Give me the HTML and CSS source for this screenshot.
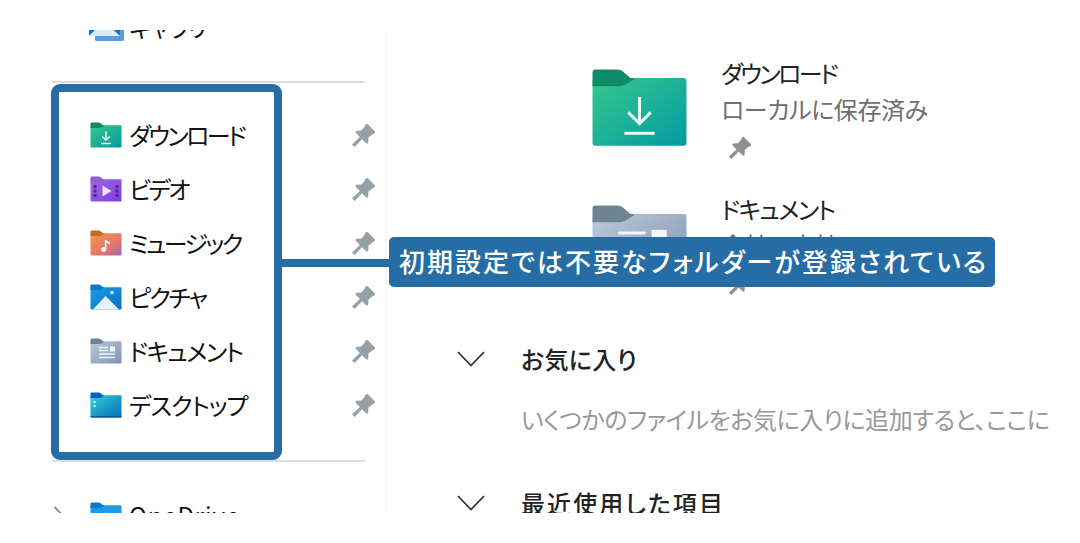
FILE: index.html
```html
<!DOCTYPE html>
<html lang="ja">
<head>
<meta charset="utf-8">
<title>エクスプローラー</title>
<link rel="stylesheet" href="styles.css">
</head>
<body>
<svg class="defs" width="0" height="0" aria-hidden="true">
  <defs>
    <linearGradient id="gGreen" x1="0" y1="0" x2="1" y2="1"><stop offset="0" stop-color="#38c78c"/><stop offset="1" stop-color="#019ba3"/></linearGradient>
    <linearGradient id="gPurple" x1="0" y1="0" x2="1" y2="1"><stop offset="0" stop-color="#a468e8"/><stop offset="1" stop-color="#7b3de0"/></linearGradient>
    <linearGradient id="gOrange" x1="0" y1="0" x2="1" y2="1"><stop offset="0" stop-color="#f59452"/><stop offset=".6" stop-color="#e5766c"/><stop offset="1" stop-color="#a066b0"/></linearGradient>
    <linearGradient id="gBlue" x1="0" y1="0" x2="1" y2="1"><stop offset="0" stop-color="#1f9be6"/><stop offset="1" stop-color="#0a6fc4"/></linearGradient>
    <linearGradient id="gSlate" x1="0" y1="0" x2="1" y2="1"><stop offset="0" stop-color="#bccadb"/><stop offset="1" stop-color="#7c94b0"/></linearGradient>
    <linearGradient id="gDesk" x1="0" y1="0" x2="1" y2="1"><stop offset="0" stop-color="#2fd0d8"/><stop offset="1" stop-color="#0a6cb8"/></linearGradient>
    <path id="tab" d="M.5 1.5Q.5.5 1.5.5H8.500Q10 .5 11 1.500L13 3.300H14.200V3.700L11.500 5.300Q10.500 6 9.500 6H.5Z"/>
    <rect id="body" x=".5" y="3.300" width="31" height="22.300" rx="1"/>
    <path id="pinShape" d="M14.200 1.200C14.800.7 15.600.8 16.100 1.300L22.700 7.900C23.400 8.600 23.200 9.700 22.300 10.100L20.300 11 16.700 14.100 16.600 18.400C16.500 19.600 15.200 20.100 14.400 19.300L10.600 15.500 3.400 23 1 20.600 8.500 13.400 4.700 9.600C3.900 8.800 4.400 7.500 5.600 7.400L9.900 7.300 13 3.700Z"/>
  </defs>
</svg>

<div class="shot">
  <nav class="sidebar">
    <div class="nav-row">
      <svg class="ico ico-gallery" viewBox="0 0 36 28"><rect x="7" y="8" width="29" height="20" rx="1.500" fill="#5a9bdc"/><rect x="1" y="1" width="31" height="22" rx="1.500" fill="#0a78cc"/><path d="M1 23 16 8 32 23Z" fill="#d8ecfb"/></svg>
      <span class="nav-label ls-c">ギャラリー</span>
    </div>
    <hr class="rule rule-a">
    <div class="group">
      <div class="nav-row">
        <svg class="ico" viewBox="0 0 32 26"><use href="#body" fill="url(#gGreen)"/><use href="#tab" fill="#0f8a66"/><path d="M16 9.500V18M12.300 14.600 16 18.300 19.700 14.600M11 21.500H21" fill="none" stroke="#eafaf5" stroke-width="1.400"/></svg>
        <span class="nav-label ls-a">ダウンロード</span>
        <svg class="pin" viewBox="0 0 24 24"><use href="#pinShape"/></svg>
      </div>
      <div class="nav-row">
        <svg class="ico" viewBox="0 0 32 26"><use href="#body" fill="url(#gPurple)"/><use href="#tab" fill="#8f62c6"/><path d="M12.500 9.500 21.500 15 12.500 20.500Z" fill="#ece4fb"/><path d="M3.500 9h3v3h-3zM3.500 13.500h3v3h-3zM3.500 18h3v3h-3zM25.500 9h3v3h-3zM25.500 13.500h3v3h-3zM25.500 18h3v3h-3z" fill="#4a2a8c"/></svg>
        <span class="nav-label ls-a">ビデオ</span>
        <svg class="pin" viewBox="0 0 24 24"><use href="#pinShape"/></svg>
      </div>
      <div class="nav-row">
        <svg class="ico" viewBox="0 0 32 26"><use href="#body" fill="url(#gOrange)"/><use href="#tab" fill="#c96a14"/><path d="M15.600 10V19.400" stroke="#fdf3ee" stroke-width="1.600"/><path d="M15.600 9.500C17 11.500 19.500 11 20 12.800V14.500C18.500 13 17 13.200 15.600 13Z" fill="#fdf3ee"/><circle cx="13.600" cy="19.600" r="2.500" fill="#fdf3ee"/></svg>
        <span class="nav-label ls-a">ミュージック</span>
        <svg class="pin" viewBox="0 0 24 24"><use href="#pinShape"/></svg>
      </div>
      <div class="nav-row">
        <svg class="ico" viewBox="0 0 32 26"><use href="#body" fill="url(#gBlue)"/><use href="#tab" fill="#0a78d0"/><path d="M3 25.600 15.500 12 29 25.600Z" fill="#e6f3fc"/><circle cx="22" cy="8.500" r="1.800" fill="#e6f3fc"/></svg>
        <span class="nav-label ls-b">ピクチャ</span>
        <svg class="pin" viewBox="0 0 24 24"><use href="#pinShape"/></svg>
      </div>
      <div class="nav-row">
        <svg class="ico" viewBox="0 0 32 26"><use href="#body" fill="url(#gSlate)"/><use href="#tab" fill="#6f8491"/><path d="M9 9.500H18M9 12.500H18M9 16H25M9 19.500H25" stroke="#f2f5f9" stroke-width="1.300"/><rect x="20" y="8.500" width="5" height="5" fill="#f2f5f9"/></svg>
        <span class="nav-label ls-c">ドキュメント</span>
        <svg class="pin" viewBox="0 0 24 24"><use href="#pinShape"/></svg>
      </div>
      <div class="nav-row">
        <svg class="ico" viewBox="0 0 32 26"><use href="#body" fill="url(#gDesk)"/><use href="#tab" fill="#0a62c0"/><path d="M3.500 9h2v2h-2zM3.500 13h2v2h-2z" fill="#e4f8fb"/><path d="M.5 24H31.500V24.600C31.500 25.200 31 25.600 30.500 25.600H1.500C1 25.600.5 25.200.5 24.600Z" fill="#0b5590"/></svg>
        <span class="nav-label ls-d">デスクトップ</span>
        <svg class="pin" viewBox="0 0 24 24"><use href="#pinShape"/></svg>
      </div>
    </div>
    <hr class="rule rule-b">
    <div class="nav-row">
      <svg class="twist" viewBox="0 0 12 20"><path d="M2 2 10 10 2 18" fill="none" stroke="#8a8a8a" stroke-width="1.800"/></svg>
      <svg class="ico" viewBox="0 0 32 26"><use href="#body" fill="#1a9ae8"/><use href="#tab" fill="#0a78d0"/><ellipse cx="16" cy="15" rx="7" ry="4.500" fill="#7cc6f2"/></svg>
      <span class="nav-label ls-wide">OneDrive</span>
    </div>
  </nav>

  <main class="content">
    <div class="tiles">
      <div class="tile">
        <svg class="tile-ico" viewBox="0 0 32 26"><use href="#body" fill="url(#gGreen)"/><use href="#tab" fill="#0f8a66"/><path d="M16 9.500V18M12.300 14.600 16 18.300 19.700 14.600M11 21.500H21" fill="none" stroke="#eafaf5" stroke-width="1"/></svg>
        <div class="tile-text">
          <div class="tile-title ls-a">ダウンロード</div>
          <div class="tile-sub">ローカルに保存済み</div>
          <svg class="tile-pin" viewBox="0 0 24 24"><use href="#pinShape"/></svg>
        </div>
      </div>
      <div class="tile">
        <svg class="tile-ico" viewBox="0 0 32 26"><use href="#body" fill="url(#gSlate)"/><use href="#tab" fill="#6f8491"/><path d="M9 9.500H18M9 12.500H18M9 16H25M9 19.500H25" stroke="#f2f5f9" stroke-width="1"/><rect x="20" y="8.500" width="5" height="5" fill="#f2f5f9"/></svg>
        <div class="tile-text">
          <div class="tile-title ls-c">ドキュメント</div>
          <div class="tile-sub">会社の本社</div>
          <svg class="tile-pin" viewBox="0 0 24 24"><use href="#pinShape"/></svg>
        </div>
      </div>
    </div>
    <section class="sec sec-fav">
      <div class="sec-head">
        <svg class="chev" viewBox="0 0 28 16"><path d="M1 1 14 14.500 27 1" fill="none" stroke="#333" stroke-width="1.800"/></svg>
        <h2 class="sec-title">お気に入り</h2>
      </div>
      <p class="sec-desc">いくつかのファイルをお気に入りに追加すると、ここに</p>
    </section>
    <section class="sec">
      <div class="sec-head">
        <svg class="chev" viewBox="0 0 28 16"><path d="M1 1 14 14.500 27 1" fill="none" stroke="#333" stroke-width="1.800"/></svg>
        <h2 class="sec-title sec-title-wide">最近使用した項目</h2>
      </div>
    </section>
  </main>
</div>

<div class="callout-box"></div>
<div class="callout-line"></div>
<div class="callout-label">初期設定では不要なフォルダーが登録されている</div>
</body>
</html>
```

FILE: styles.css
```css
* { box-sizing: border-box; }
html, body { margin: 0; padding: 0; background: #fff; }
body {
  width: 1080px;
  height: 543px;
  overflow: hidden;
  position: relative;
  font-family: "Noto Sans CJK JP", "Noto Sans", sans-serif;
  font-feature-settings: "palt";
  color: #111;
}
.defs { position: absolute; }

.shot {
  margin-top: 30px;
  height: 483px;
  overflow: hidden;
  display: flex;
  align-items: flex-start;
}

.sidebar {
  width: 387px;
  height: 483px;
  flex: none;
  border-right: 2px solid #f6f6f6;
  padding: 0 0 0 52px;
  overflow: hidden;
}
.sidebar > :first-child { margin-top: -30px; }

.nav-row {
  height: 54px;
  display: flex;
  align-items: center;
  padding-left: 38px;
  position: relative;
}
.ico { width: 32px; height: 26px; flex: none; margin-right: 7px; }
.ico-gallery { width: 36px; height: 28px; margin-left: -2px; margin-right: 5px; }
.nav-label {
  font-size: 24px;
  line-height: 30px;
  font-weight: 400;
  letter-spacing: -.6px;
  white-space: nowrap;
  color: #111;
}
.ls-a { letter-spacing: -2.600px; }
.ls-b { letter-spacing: -2.100px; }
.ls-c { letter-spacing: -1.500px; }
.ls-d { letter-spacing: -1.100px; }
.ls-wide { letter-spacing: .9px; }
.pin {
  position: absolute;
  left: 299px;
  top: 15px;
  width: 25px;
  height: 25px;
  fill: #95a1a8;
}
.twist { position: absolute; left: 0; top: 17px; width: 13px; height: 20px; }

.rule { margin: 0; border: 0; height: 2px; background: #ddd; width: 313px; }
.rule-a { margin-top: 27px; margin-bottom: 25px; }
.rule-b { margin-top: 28px; margin-bottom: 26px; }

.content { flex: 1; min-width: 0; position: relative; }

.tiles { padding: 39px 0 0 204px; }
.tile { display: flex; height: 136px; }
.tile-ico { width: 97px; height: 79px; flex: none; margin-right: 33px; margin-top: -1px; }
.tile-text { margin-top: -15px; }
.tile-title { font-size: 24px; line-height: 38px; color: #222; white-space: nowrap; }
.tile-sub { font-size: 24px; line-height: 38px; margin-top: -2px; letter-spacing: -.4px; color: #6e6e6e; white-space: nowrap; }
.tile-pin { display: block; width: 24px; height: 24px; margin: 8px 0 0 7px; fill: #8f8f8f; }

.sec { padding-left: 70px; }
.sec-fav { margin-top: -1px; }
.sec-head { display: flex; align-items: center; height: 38px; }
.chev { width: 28px; height: 16px; flex: none; margin-right: 36px; }
.sec-title { margin: 0; font-size: 24px; line-height: 38px; font-weight: 500; letter-spacing: .4px; color: #222; white-space: nowrap; }
.sec-title-wide { letter-spacing: 2.100px; }
.sec-desc { margin: 22px 0 46px 64px; font-size: 24px; line-height: 38px; letter-spacing: -.4px; color: #999; white-space: nowrap; }

.callout-box {
  position: absolute;
  left: 51px;
  top: 84px;
  width: 231px;
  height: 376px;
  border: 8px solid #266ca5;
  border-radius: 9px;
}
.callout-line {
  position: absolute;
  left: 282px;
  top: 259px;
  width: 107px;
  height: 8px;
  background: #266ca5;
}
.callout-label {
  position: absolute;
  left: 389px;
  top: 237px;
  width: 606px;
  height: 50px;
  background: #266ca5;
  border-radius: 5px;
  color: #fff;
  font-size: 26px;
  font-weight: 500;
  line-height: 48px;
  padding-left: 10px;
  letter-spacing: 2px;
  white-space: nowrap;
}
```
